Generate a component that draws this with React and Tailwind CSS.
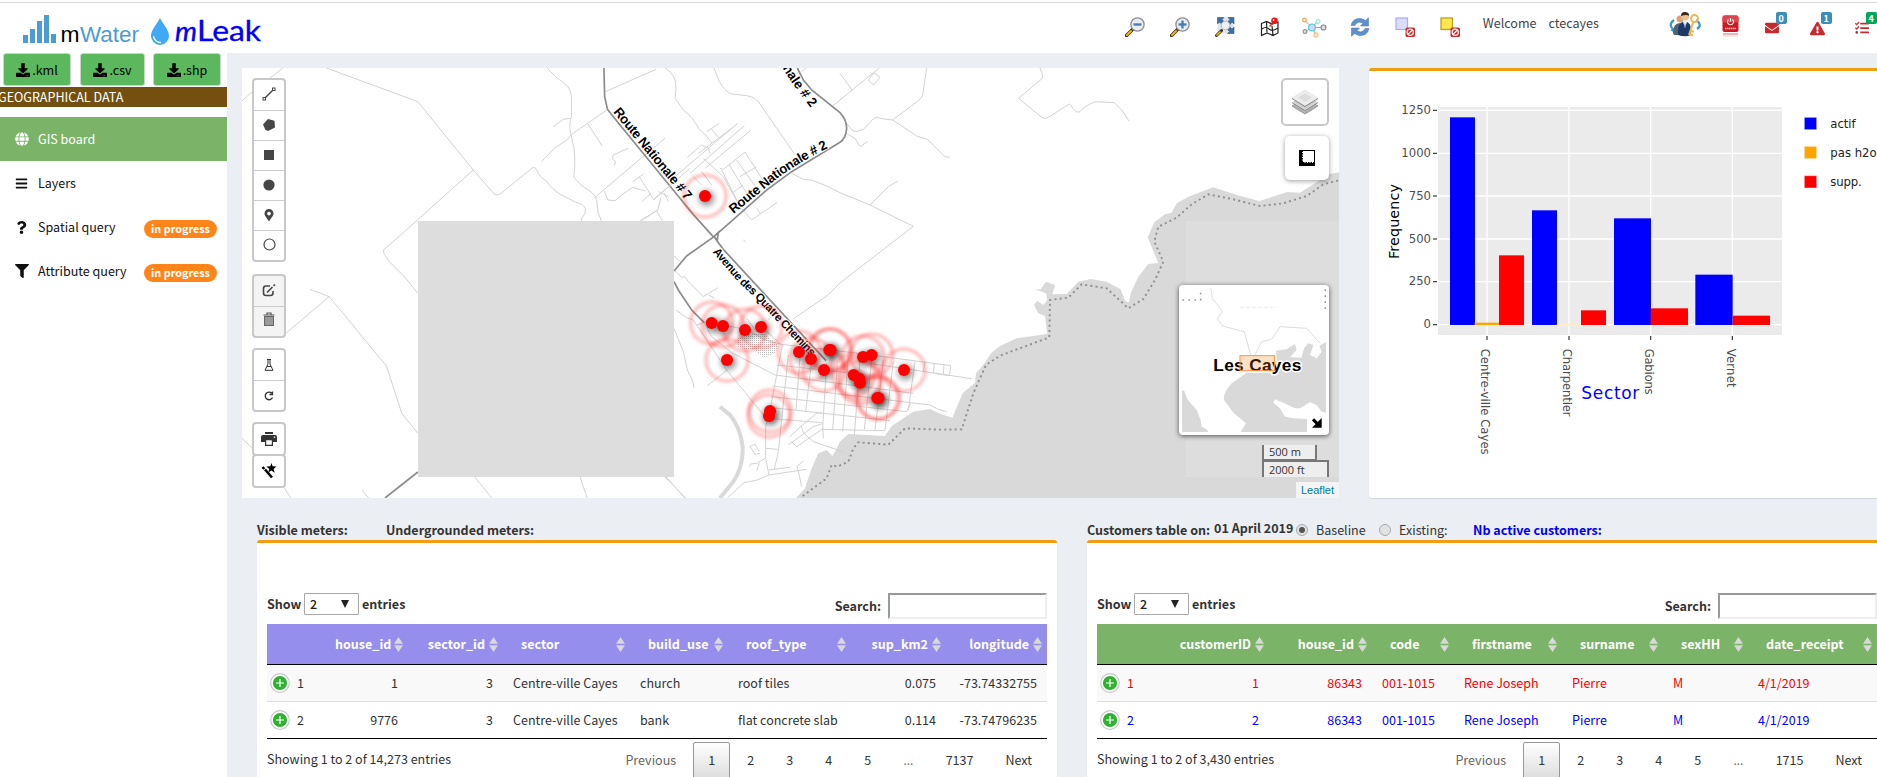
import React from "react";
import {
  FaDownload, FaGlobe, FaBars, FaQuestion, FaFilter, FaEnvelope,
  FaExclamationTriangle, FaTasks, FaMapMarkerAlt,
} from "react-icons/fa";

/* ---------- Header ---------- */

function Magnifier({ sign }) {
  return (
    <svg width="20" height="20" viewBox="0 0 20 20">
      <path d="M1.500 18.500 L7.500 12.500" stroke="#3b3320" strokeWidth="3.400" strokeLinecap="round" />
      <path d="M2 18 L6 14" stroke="#f2b41c" strokeWidth="2" strokeLinecap="round" />
      <circle cx="12.500" cy="7.500" r="6.600" fill="#e9edf1" stroke="#8b8f94" strokeWidth="1.300" />
      <path d="M8.500 7.500 H16.500" stroke="#4a7fb5" strokeWidth="2.400" />
      {sign === "+" && <path d="M12.500 3.500 V11.500" stroke="#4a7fb5" strokeWidth="2.400" />}
    </svg>
  );
}

function ExtentIcon() {
  return (
    <svg width="20" height="20" viewBox="0 0 20 20">
      <rect x="2.500" y="0.500" width="16.500" height="16" fill="#dfe6ee" />
      <path d="M2.500 .5h6.500l-2 2 2.400 2.400-2.500 2.500L4.500 5l-2 2z M19 .5h-6l2 2-2.400 2.400 2.500 2.500L17 5l2 2z M19 16.500h-6.500l2-2-2.400-2.400 2.500-2.500L17 12l2-2z" fill="#3f6fa3" stroke="#2d5787" strokeWidth=".6" />
      <path d="M1.500 18.500 L6.500 13.500" stroke="#3b3320" strokeWidth="3" strokeLinecap="round" />
      <path d="M2 18 L5 15" stroke="#f2b41c" strokeWidth="1.700" strokeLinecap="round" />
      <circle cx="10.500" cy="8.500" r="4.300" fill="#eef1f4" stroke="#b5b9be" />
    </svg>
  );
}

function MapPinIcon() {
  return (
    <svg width="20" height="20" viewBox="0 0 20 20" fill="none" stroke="#222" strokeWidth="1.200">
      <path d="M1.500 6.500 L6.500 4.500 L12 7 L18 5 V16 L13 18.500 L7 16 L1.500 18.500Z M6.500 4.500 L7 16 M12 9 L13 18.500 M2 12 Q6 9 9 12 T18 11" />
      <path d="M9.500 9.500 L13 6" stroke="#e22" strokeWidth="1.400" />
      <circle cx="14.500" cy="3.800" r="3.300" fill="#f01414" stroke="none" />
      <circle cx="13.600" cy="3" r=".9" fill="#fff" stroke="none" />
    </svg>
  );
}

function NetworkIcon() {
  return (
    <svg width="25" height="21" viewBox="0 0 25 21" fill="none">
      <path d="M10 10.500 L2.500 3 M10 10.500 L16 4 M10 10.500 H21 M10 10.500 L3 14.500 M10 10.500 L14 18" stroke="#b59a92" strokeWidth="1" />
      <circle cx="10" cy="10.500" r="3.400" fill="#cfd8fa" stroke="#62cfd6" strokeWidth="1.300" />
      <circle cx="2.500" cy="3" r="1.800" fill="#fff" stroke="#f4a64a" strokeWidth="1.300" />
      <circle cx="16" cy="4.500" r="2" fill="#e6fbf7" stroke="#9fe3da" strokeWidth="1.200" />
      <circle cx="21.500" cy="10.500" r="2.500" fill="#ddd" stroke="#888" strokeWidth="1.200" />
      <circle cx="3" cy="14.500" r="1.900" fill="#ddd" stroke="#999" strokeWidth="1.200" />
      <circle cx="14" cy="18" r="2.100" fill="#fde6cc" stroke="#f7c48b" strokeWidth="1.200" />
    </svg>
  );
}

function RefreshIcon() {
  return (
    <svg width="20" height="20" viewBox="0 0 20 20" fill="#5d90cc" stroke="#4176b3" strokeWidth=".5">
      <path d="M1 8.500 C2 3 7 .5 12 1.800 L15.500 3.500 L18.500 .8 V9 H10.500 L13 6.300 C10 4.300 6.500 5 5 8.500Z" />
      <path d="M19 11.500 C18 17 13 19.500 8 18.200 L4.500 16.500 L1.500 19.200 V11 H9.500 L7 13.700 C10 15.700 13.500 15 15 11.500Z" />
    </svg>
  );
}

function SelectOffIcon({ fill, stroke }) {
  return (
    <svg width="20" height="20" viewBox="0 0 20 20">
      <rect x="1" y="1" width="11.500" height="11.500" fill={fill} stroke={stroke} strokeWidth="1.200" />
      <rect x="10.500" y="10.500" width="9.500" height="9.500" rx="1.500" fill="#d32a2e" />
      <circle cx="15.200" cy="15.200" r="3.100" fill="none" stroke="#fff" strokeWidth="1.200" />
      <path d="M13 17.400 L17.400 13" stroke="#fff" strokeWidth="1.200" />
    </svg>
  );
}

function UsersIcon() {
  return (
    <svg width="34" height="26" viewBox="0 0 34 26">
      <path d="M6 9 Q-1 14 7 20" fill="none" stroke="#3f97c9" strokeWidth="2.200" />
      <path d="M28 9 Q35 14 29 18" fill="none" stroke="#3f97c9" strokeWidth="2.200" />
      <path d="M8 17 l-1 5 -5-3z" fill="#3f97c9" />
      <circle cx="12" cy="8" r="3.500" fill="#d8a377" />
      <path d="M5 22 Q5 12 12 12 Q14 12 15 14 V24 H6Z" fill="#56626f" />
      <circle cx="17" cy="5.500" r="4" fill="#eabf94" />
      <path d="M13 5 Q13 0.500 17.500 1 Q21.500 1.500 21 5 Q19 3 13 5Z" fill="#3b2a1c" />
      <path d="M10 24 Q9 10.500 17 10.500 Q24 10.500 23 24 Q17 26.500 10 24Z" fill="#1d3a66" />
      <path d="M15 10.500 L17 17 L19 10.500Z" fill="#fff" />
      <path d="M17 11.500 L16.200 15 L17 17 L17.800 15Z" fill="#3e8fd0" />
      <circle cx="26.500" cy="7.500" r="3.500" fill="none" stroke="#e9b95c" strokeWidth="2" />
      <path d="M25.500 10.500 L21 24 M22.500 19.500 L26 21 M21.500 23 L25 24.500" stroke="#e9b95c" strokeWidth="2" />
    </svg>
  );
}

function PowerIcon() {
  return (
    <svg width="17" height="23" viewBox="0 0 17 23">
      <rect x=".5" y=".5" width="16" height="16.500" rx="2" fill="#cf1720" />
      <rect x=".5" y=".5" width="16" height="7" rx="2" fill="#e0454b" />
      <path d="M6.500 4.500 A3 3 0 1 0 10.500 4.500 M8.500 3 V6.500" fill="none" stroke="#fff" strokeWidth="1.200" />
      <path d="M3 13.500 H14" stroke="#f6c9cb" strokeWidth="1.400" strokeDasharray="1.400 .5" />
      <rect x="1" y="18" width="15" height="2" fill="#eab5b7" />
      <rect x="1" y="20" width="15" height="2" fill="#f9e6e6" />
    </svg>
  );
}

function Notice({ icon, count, color }) {
  return (
    <div className="relative flex h-full w-[45px] shrink-0 justify-center pt-[21px] text-[#c9282d]">
      {icon}
      <span className={"absolute left-[26px] top-[12px] flex h-[12px] w-[11px] items-center justify-center rounded-[2px] text-[9px] font-bold leading-none text-white " + color}>
        {count}
      </span>
    </div>
  );
}

function Header() {
  const tools = [
    <Magnifier sign="-" />, <Magnifier sign="+" />, <ExtentIcon />, <MapPinIcon />, <NetworkIcon />, <RefreshIcon />,
    <SelectOffIcon fill="#dcdcff" stroke="#a9a9f5" />, <SelectOffIcon fill="#fde74c" stroke="#b59b1d" />,
  ];
  return (
    <header className="flex h-[53px] w-full shrink-0 overflow-hidden bg-white">
      <div className="w-[1112px] shrink-0">
        <svg width="300" height="53" viewBox="0 0 300 53">
          <g fill="#4d9bd3">
            <rect x="23" y="35" width="5" height="8" /><rect x="30" y="29" width="5" height="14" />
            <rect x="37" y="21" width="5" height="22" /><rect x="44" y="15" width="5" height="28" />
            <rect x="51" y="34" width="5" height="9" />
          </g>
          <text y="42.300" fontFamily="Liberation Sans" fontSize="22">
            <tspan x="60.500" fill="#000" textLength="19" lengthAdjust="spacingAndGlyphs">m</tspan>
            <tspan x="80" fill="#4d9bd3" textLength="59" lengthAdjust="spacingAndGlyphs">Water</tspan>
          </text>
          <path d="M160 18 C163 24 169 30 169 36 A9 9 0 0 1 151 36 C151 30 157 24 160 18Z" fill="#3fa9f5" />
          <path d="M153.500 36 A7 7 0 0 0 161 42.500" fill="none" stroke="#fff" strokeWidth="1.300" />
          <g fontFamily="Lato" fontWeight="400" fill="#0000f5" stroke="#0000f5" strokeWidth=".35">
            <text x="175" y="41" fontStyle="italic" fontSize="27" textLength="22" lengthAdjust="spacingAndGlyphs">m</text>
            <text x="197" y="41" fontSize="29" textLength="64" lengthAdjust="spacingAndGlyphs">Leak</text>
          </g>
        </svg>
      </div>
      {tools.map((t, i) => (
        <div key={i} className="flex h-full w-[45.100px] shrink-0 items-start justify-center pt-[17px]">{t}</div>
      ))}
      <div className="ml-[10px] mt-[13px] flex w-[179px] shrink-0 gap-[12px] leading-[20px] text-[#444]">
        <span>Welcome</span><span>ctecayes</span>
      </div>
      <div className="mr-[3px] flex w-[46px] shrink-0 justify-center pt-[11px]"><UsersIcon /></div>
      <div className="flex w-[39px] shrink-0 justify-center pt-[15px]"><PowerIcon /></div>
      <Notice icon={<FaEnvelope size={14} />} count="0" color="bg-[#3c8dbc]" />
      <Notice icon={<FaExclamationTriangle size={15} />} count="1" color="bg-[#3c8dbc]" />
      <Notice icon={<FaTasks size={14} />} count="4" color="bg-[#00a65a]" />
    </header>
  );
}

/* ---------- Sidebar ---------- */

function MenuItem({ icon, label, active, badge }) {
  return (
    <li className={"flex h-[44px] items-center pl-[15px] pr-[10px] " + (active ? "bg-[#7bb368] text-white" : "text-[#111]")}>
      <span className="flex w-[23px] items-center">{icon}</span>
      <span className="flex-1">{label}</span>
      {badge && <span className="mt-[3px] flex h-[18px] w-[73px] items-center justify-center rounded-full bg-[#ff851b] pb-px text-[10.800px] font-bold leading-none text-white">{badge}</span>}
    </li>
  );
}

function Sidebar() {
  const btn = "flex h-[33px] items-center justify-center gap-[2px] rounded-[3px] border border-[#c5d9c5] bg-[#5cb85c] text-black ";
  return (
    <aside className="flex w-[227px] shrink-0 flex-col bg-white">
      <div className="flex h-[34px] pl-[3px]">
        <button className={btn + "w-[68px]"}><FaDownload size={14} />.kml</button>
        <button className={btn + "ml-[9px] w-[65px]"}><FaDownload size={14} />.csv</button>
        <button className={btn + "ml-[8px] w-[68px]"}><FaDownload size={14} />.shp</button>
      </div>
      <div className="h-[20px] bg-[#73500f] leading-[20px] text-white"><span className="-ml-[2px]">GEOGRAPHICAL DATA</span></div>
      <ul className="mt-[10px]">
        <MenuItem active icon={<FaGlobe size={14} />} label="GIS board" />
        <MenuItem icon={<FaBars size={13} />} label="Layers" />
        <MenuItem icon={<FaQuestion size={13} />} label="Spatial query" badge="in progress" />
        <MenuItem icon={<FaFilter size={14} />} label="Attribute query" badge="in progress" />
      </ul>
    </aside>
  );
}

/* ---------- Map ---------- */

const METERS = [
  [195, 408], [215, 789], [249, 798], [315, 810], [363, 801], [261, 900], [477, 876], [513, 897], [552, 930],
  [568, 870], [572, 870], [695, 885], [669, 891], [792, 930], [641, 945], [658, 956], [660, 968], [712, 1014], [716, 1014],
  [390, 1053], [387, 1068],
];

const WEST_STREETS =
  "M6 122L38 92M80 58L120 24M242 24L498 125L653 330L712 402Q720 408 728 402L820 323Q828 320 832 332Q835 348 860 365Q870 385 900 405L940 427Q960 430 967 445Q970 460 957 475L955 483" +
  "M653 330L455 520L402 570Q400 580 408 588L418 605L462 652L498 700M196 688L250 710L124 824M250 710L410 918L453 1060L498 1120" +
  "M860 24Q880 50 910 72Q928 85 928 115V170Q918 200 930 240Q942 280 935 350Q945 370 975 390Q1000 405 1000 430Q998 455 1012 483M877 200L905 178L925 175" +
  "M844 305L880 265L915 240L930 222L1027 150M973 190L1014 258M1023 95L1165 28M1190 235L1095 320L993 413M1087 265L1045 285L1043 297L1052 305L1048 316" +
  "M1020 393L1030 420L1050 422L1075 400L1100 382L1135 393M1130 342L1100 365M1118 350L1158 418L1200 380M1125 425L1150 400M1122 483L1170 450L1178 415M1165 450L1183 483M1172 395L1200 410M1188 400L1200 425" +
  "M657 1251L705 1314M952 1251L972 1314M1190 1251L1248 1314M6 1135L38 1168M122 1280L142 1314M342 1290L360 1314";

const TOWN_STREETS =
  "M75 24Q110 45 108 85L105 115L130 150L155 172L178 208L192 220L215 248M222 24L238 65Q255 95 275 102L320 107Q350 112 362 135L462 280M485 35L498 24M578 138L718 24M600 40L636 90M685 60L702 38L720 52L700 75Z" +
  "M860 24L848 105Q845 115 835 122L758 180Q730 178 708 172Q698 175 690 188L670 208L648 215Q635 213 632 205L620 190M758 180L830 228L862 238L915 290L930 292M622 222L645 235L660 260L683 245" +
  "M455 340L490 358L515 360L560 378L600 398L690 435L820 499L605 665L560 708L458 778M690 435L745 380L773 364" +
  "M105 350L293 190M175 280L275 205M313 197L150 340M333 210L195 325M142 292L185 255L205 265L210 280M200 215L238 190M215 208L235 232M190 295L250 350L300 440L335 480M240 325L250 328L315 276L375 370M245 330L300 440M268 315L320 400M290 300L350 385M300 350L350 320M275 400L310 375M335 480L412 427M350 445L362 462M310 540L317 545M42 418L150 325M45 455L0 483M160 350L185 375M185 335L215 375" +
  "M102 587L120 605M102 630L125 652L135 650L145 665L190 710L233 683M205 705L222 713M102 805L130 875L142 930L157 960L162 983" +
  "M108 750L140 773L160 780L170 795L260 930L375 1070M192 787L215 830L275 878L405 945M202 977L262 930M170 795L200 785L300 805L340 820L375 840L425 853M320 775L350 815M365 800L430 860M385 780L395 770" +
  "M425 853L640 878L932 917M410 915L640 940M700 912L995 956M405 945L820 1000M398 978L870 1035L895 1048L920 1055M393 1010L800 1055L812 1030M388 1042L750 1082M385 1075L545 1088M545 1108L735 1112" +
  "M427 855L392 1040L377 1100V1195L387 1245M445 885L415 1175L403 1228M480 890L468 1050M515 900L497 1055M560 910L548 1100L550 1135M592 915L578 1110M625 890L608 1115M660 900L643 1125M695 900L673 1108M730 900L705 1112M760 905L735 1112M825 905L805 1050M855 905L850 935M883 912L880 940L928 947L932 917M912 915L910 943" +
  "M377 1165L413 1168M330 1160L345 1152L357 1175M330 1160L345 1183L360 1180M328 1220L332 1212L350 1210L375 1195M358 1210L350 1232M262 1314L312 1268Q350 1265 387 1245L500 1228M387 1230L450 1222M470 1220L490 1203M472 1220L485 1280" +
  "M445 1155L520 1100L550 1090M455 1145L470 1160L550 1105M450 1130L484 1098L530 1060L545 1058M484 1098L490 1118L520 1145L608 1175M78 1251L135 1314";

const COAST =
  "M-612 1314L-585 1285L-565 1225L-545 1180L-520 1170L-502 1188L-480 1145L-455 1122L-345 1128L-325 1098L-260 1055L-210 1047L-175 1063L-143 1073L-112 1000L-75 968L-72 940L-50 915L-27 880L0 858L50 835L142 822L135 768L115 760L102 735L112 722L130 735L142 720L138 700L105 688L122 688L138 665L165 675L157 703L200 702L235 665L272 657L320 665L362 688L375 722L387 727L392 700L415 650L445 612L475 609L443 532L463 487L495 463L515 458L530 430L565 410L640 382L710 405L778 423L862 396L900 398L960 360L987 343L1017 337V1314Z";

const BOUNDARY =
  "M-592 1308L-520 1255L-505 1215L-488 1220L-455 1205L-440 1165L-425 1147L-335 1154L-285 1105L-180 1109L-115 1108L-80 1000L-42 915L0 887L148 832L150 720L205 713L245 673L320 685L385 745L430 717L465 660L490 605L463 545L475 500L530 473L575 433L625 403L700 418L780 438L850 430L920 408L970 373L1017 361";

function MapDrawing() {
  const west = "translate(240 60) scale(.357143 .333333)";
  const town = "translate(640 60) scale(.333333)";
  const east = "translate(1000 60) scale(.333333)";
  const minor = { fill: "none", stroke: "#d2d2d2", strokeWidth: 1, vectorEffect: "non-scaling-stroke" };
  const major = { fill: "none", stroke: "#8c8c8c", strokeWidth: 1.7, vectorEffect: "non-scaling-stroke" };
  const label = { fontFamily: "Liberation Sans", fontWeight: 700, fill: "#000", stroke: "#fff", strokeWidth: 2, paintOrder: "stroke" };
  return (
    <svg className="block" width="1097" height="430" viewBox="242 68 1097 430">
      <defs>
        <filter id="ring" x="-50%" y="-50%" width="200%" height="200%"><feGaussianBlur stdDeviation="1.600" /></filter>
        <filter id="shade" x="-100%" y="-100%" width="300%" height="300%"><feGaussianBlur stdDeviation="3" /></filter>
        <pattern id="dots" width="2" height="2" patternUnits="userSpaceOnUse"><rect width="1" height="1" fill="#bbb" /></pattern>
        <path id="rn2" d="M733.500 214L769 185Q791 166.500 829 147.500" />
        <path id="rn2b" d="M778.500 61Q793 87 820 119" />
        <path id="rn7" d="M613 112L687 202" />
        <path id="aqc" d="M712.500 252L736 279.500L757 300L812 358" />
      </defs>
      <rect x="242" y="68" width="1097" height="430" fill="#fff" />
      <g transform={east}>
        <path d={COAST} fill="#d9d9d9" />
        <rect x="557" y="483" width="460" height="768" fill="#ddd" />
        <path {...minor} d="M120 24L127 42V55L56 115L125 172Q138 180 148 170L208 132Q215 135 218 145Q230 160 240 155Q250 140 285 125L343 128Q370 150 387 183" />
        <path d={BOUNDARY} fill="none" stroke="#8e8e8e" strokeWidth="1.900" strokeDasharray="2 3.200" vectorEffect="non-scaling-stroke" />
      </g>
      <g transform={west}>
        <path {...minor} d={WEST_STREETS} />
        <path {...major} d="M1019 24L1021 110L1029 148L1060 190L1272 467L1325 530M406 1314L498 1236" />
      </g>
      <g transform={town}>
        <path {...minor} d={TOWN_STREETS} />
        <path d="M240 1040L270 1065Q300 1100 308 1160Q310 1220 280 1265L240 1314" fill="none" stroke="#d9d9d9" strokeWidth="12" />
        <path {...major} d="M472 24L490 60L515 90L600 158Q620 180 620 205Q618 235 600 247L455 335L380 390L222 530L140 588L102 633M102 665L115 690L155 750L192 787M222 530L250 568L558 902M222 530L235 517L232 540Z" />
      </g>
      <path d="M738 338L760 332L778 344L776 352L764 358L755 350L737 348Z" fill="url(#dots)" />
      <rect x="418" y="221" width="256" height="256" fill="#ddd" />
      <text {...label} fontSize="13.300"><textPath href="#rn7" textLength="115">Route Nationale # 7</textPath></text>
      <text {...label} fontSize="13.300"><textPath href="#rn2" textLength="116">Route Nationale # 2</textPath></text>
      <text {...label} fontSize="13.300"><textPath href="#rn2b" textLength="57">onale # 2</textPath></text>
      <text {...label} fontSize="11.500"><textPath href="#aqc" textLength="144">Avenue des Quatre Chemins</textPath></text>
      {METERS.map(([x, y], i) => {
        const cx = 640 + x / 3, cy = 60 + y / 3;
        return (
          <g key={i}>
            <circle cx={cx} cy={cy} r="21" fill="none" stroke="#ff2020" strokeWidth="3.400" opacity=".29" filter="url(#ring)" />
            <circle cx={cx + 1.500} cy={cy + 2} r="7.500" fill="#000" opacity=".45" filter="url(#shade)" />
          </g>
        );
      })}
      {METERS.map(([x, y], i) => <circle key={i} cx={640 + x / 3} cy={60 + y / 3} r="6" fill="#fe0000" />)}
    </svg>
  );
}

function ToolGroup({ children, muted, raised, className = "" }) {
  return (
    <div className={"flex w-[34px] flex-col rounded-[4px] border-2 border-[#c8c8c8] " + (muted ? "bg-[#f4f4f4] " : "bg-white ") + className}>
      {React.Children.map(children, (c, i) => (
        <div className={"flex h-[30px] items-center justify-center text-[#464646] " + (i ? "border-t border-[#ccc] " : "") + (raised ? "pb-[2px]" : "")}>{c}</div>
      ))}
    </div>
  );
}

function MapTools() {
  return (
    <div className="absolute left-[10px] top-[10px] flex flex-col">
      <ToolGroup raised>
        <svg width="14" height="14" viewBox="0 0 14 14" fill="#fff" stroke="#464646"><path d="M3 11L11 3" strokeWidth="1.500" /><rect x="1" y="10.500" width="2.500" height="2.500" /><rect x="10.500" y="1" width="2.500" height="2.500" /></svg>
        <svg width="14" height="14" viewBox="0 0 14 14" fill="#464646"><path d="M6 1L12.500 2.800L13 9.500L6 13L3.500 12L1 6.500Z" /></svg>
        <svg width="10" height="10"><rect width="10" height="10" fill="#464646" /></svg>
        <svg width="12" height="12"><circle cx="6" cy="6" r="5.600" fill="#464646" /></svg>
        <FaMapMarkerAlt size={12} />
        <svg width="13" height="13"><circle cx="6.500" cy="6.500" r="5.500" fill="none" stroke="#464646" strokeWidth="1.200" /></svg>
      </ToolGroup>
      <ToolGroup muted raised className="mt-[12px]">
        <svg width="14" height="14" viewBox="0 0 14 14" fill="none" stroke="#464646" strokeWidth="1.600"><path d="M8 3H4Q1.500 3 1.500 5.500V10Q1.500 12.500 4 12.500H8.500Q11 12.500 11 10V8M5 9.500L10.500 4M11.500 3L13 1.500" /></svg>
        <svg className="-mt-[4px]" width="12" height="14" viewBox="0 0 12 14"><path d="M0.500 3H11.500M4 3V1H8V3" fill="none" stroke="#555" strokeWidth="1.200" /><rect x="1.500" y="4.500" width="9" height="9" fill="#999" stroke="#666" /></svg>
      </ToolGroup>
      <ToolGroup className="mt-[10px]">
        <svg width="10" height="12" viewBox="0 0 10 12" fill="none" stroke="#333" strokeWidth="1"><path d="M3 .5H7M4 .5V5L1 11.300H9L6 5V.5M3 7.500H7" /></svg>
        <svg width="10" height="10" viewBox="0 0 10 10" fill="none" stroke="#333" strokeWidth="1.300"><path d="M8.500 6.500A3.800 3.800 0 1 1 7.800 2.300M8.500 .5V3.500H5.500" /></svg>
      </ToolGroup>
      <ToolGroup className="mt-[10px]">
        <svg width="16" height="14" viewBox="0 0 16 14" fill="#333"><path d="M4 0H12V2H4Z M2 3H14Q16 3 16 5V10H12V7.500H4V10H0V5Q0 3 2 3Z" /><path d="M4.600 7.600H11.400V13.400H4.600Z" fill="#fff" stroke="#333" strokeWidth="1.200" /><circle cx="13.500" cy="5.300" r=".8" fill="#fff" /></svg>
      </ToolGroup>
      <ToolGroup className="-mt-[2px]">
        <svg width="16" height="16" viewBox="0 0 16 16" fill="#000"><path d="M4 6.500L11 14.500" stroke="#000" strokeWidth="2.600" /><path d="M1.500 4L3.300 6" stroke="#000" strokeWidth="2.600" /><path d="M10.500 0L11.600 3.300L15.500 3.500L12.600 6L13.700 9.800L10.400 7.600L7.200 9.600L8.300 6L5.500 3.500L9.300 3.300Z" /></svg>
      </ToolGroup>
    </div>
  );
}

function MiniMap() {
  return (
    <div className="h-[150px] w-[150px] rounded-[4px] bg-white p-[3px] shadow-[0_1px_5px_rgba(0,0,0,0.65)]">
      <svg className="block" width="144" height="144" viewBox="546 684 432 432">
        <g fill="#d9d9d9">
          <path d="M546 990L553 993L562 1018L590 1050L602 1080L605 1100L618 1106L625 1116H546Z" />
          <path d="M978 1058L965 1055L950 1035L930 1027L900 1045L885 1045L850 1028L825 1018L820 1028L840 1045L855 1070L880 1075L921 1077V1116H722L738 1090L720 1075L700 1058L672 1020Q668 1000 695 970L740 938H830V900L828 872L860 868L885 852L890 870L870 892L905 893L912 865L925 850L940 855L930 885L950 895L965 875L958 858L978 845Z" />
        </g>
        <path d="M633 685L637 715L668 755L652 775L668 798L733 815L752 885M765 885L785 845L815 838L840 800L920 805L960 850" fill="none" stroke="#ddd" strokeWidth="3" />
        <path d="M720 742H830" stroke="#e5e5e5" strokeWidth="2" strokeDasharray="12 6" />
        <path d="M547 720H602V688M976 688V750" fill="none" stroke="#999" strokeWidth="5" strokeDasharray="5 13" />
        <text x="640" y="932" fontFamily="Liberation Sans" fontWeight="700" fontSize="52" textLength="264" stroke="#fff" strokeWidth="9" paintOrder="stroke">Les Cayes</text>
        <rect x="720" y="887" width="104" height="45" fill="#ff7800" fillOpacity=".22" stroke="#ff9040" strokeWidth="3" />
        <rect x="921" y="1060" width="57" height="56" fill="#fff" />
        <path d="M939 1078L960 1099" stroke="#000" strokeWidth="9" /><path d="M965 1074V1103H936Z" />
      </svg>
    </div>
  );
}

function MapPanel() {
  return (
    <section className="relative h-[430px] w-[1097px] shrink-0 overflow-hidden">
      <MapDrawing />
      <MapTools />
      <div className="absolute right-[10px] top-[10px] flex h-[48px] w-[48px] items-center justify-center rounded-[5px] border-2 border-[#c8c8c8] bg-white">
        <svg width="28" height="28" viewBox="0 0 28 28">
          <path d="M1 18L14 10L27 18L14 26Z" fill="#b0b0b0" stroke="#8a8a8a" strokeWidth=".8" />
          <path d="M1 14L14 6L27 14L14 22Z" fill="#cdcdcd" stroke="#fff" strokeWidth=".8" /><path d="M1 14.500L14 22.500L27 14.500" fill="none" stroke="#8a8a8a" />
          <path d="M1 10L14 2L27 10L14 18Z" fill="#ececec" stroke="#e0e0e0" strokeWidth=".6" /><path d="M7 9.500L14 5.500L21 9.500L14 14Z" fill="#dcdcdc" /><path d="M1 10.500L14 18.500L27 10.500" fill="none" stroke="#8a8a8a" />
        </svg>
      </div>
      <div className="absolute right-[10px] top-[68px] flex h-[44px] w-[44px] items-center justify-center rounded-[5px] bg-white shadow-[0_1px_5px_rgba(0,0,0,0.4)]">
        <svg width="16" height="16" viewBox="0 0 16 16"><rect width="16" height="16" /><path d="M4 1H15V12H4Z" fill="#fff" /><path d="M3 2.500H4.500M3 5H4.500M3 7.500H4.500M3 10H4.500M6 11.500V13M8.500 11.500V13M11 11.500V13M13.500 11.500V13" stroke="#fff" /></svg>
      </div>
      <div className="absolute bottom-[63px] right-[10px]"><MiniMap /></div>
      <div className="absolute right-[10px] top-[377px] w-[67px] text-[11px] text-[#333]">
        <div className="h-[16px] w-[55px] border-x-2 border-b-2 border-[#777] bg-white/50 pl-[5px] font-['Open_Sans'] leading-[14px]">500 m</div>
        <div className="-mt-[1px] h-[17px] w-[67px] border-x-2 border-t-2 border-[#777] bg-white/50 pl-[5px] font-['Open_Sans'] leading-[16px]">2000 ft</div>
      </div>
      <div className="absolute bottom-0 right-0 h-[16px] w-[43px] bg-white/70 text-center font-['Liberation_Sans'] text-[11px] leading-[16px] text-[#0078a8]">Leaflet</div>
    </section>
  );
}

/* ---------- Chart ---------- */

const BARS = [
  [270, 172, 75, "#00f"], [344, 788, 74, "#ffa500"], [417, 586, 75, "#f00"],
  [516, 451, 75, "#00f"], [590, 793, 74, "#ffe0a8"], [663, 751, 75, "#f00"],
  [762, 475, 111, "#00f"], [872, 745, 112, "#f00"],
  [1006, 644, 112, "#00f"], [1118, 767, 112, "#f00"],
];
const Y_TICKS = [["1250", 151], ["1000", 280], ["750", 408], ["500", 537], ["250", 665], ["0", 794]];
const X_TICKS = [["Centre-ville Cayes", 381, 318], ["Charpentier", 627, 204], ["Gabions", 872, 138], ["Vernet", 1117, 117]];
const LEGEND = [["actif", 190, "#00f", 76], ["pas h2o", 277, "#ffa500", 139], ["supp.", 365, "#f00", 94]];

function ChartPanel() {
  return (
    <section className="ml-[30px] h-[430px] w-[520px] shrink-0 rounded-[3px] border-t-[3px] border-[#f39c12] bg-white shadow-[0_1px_1px_rgba(0,0,0,0.1)]">
      <svg className="block" width="520" height="425" viewBox="27 33 1560 1275" fontFamily="DejaVu Sans" fill="#4d4d4d">
        <rect x="234" y="141" width="1032" height="684" fill="#ebebeb" />
        {Y_TICKS.map(([t, y]) => (
          <g key={t}>
            <path d={`M234 ${y}H1266`} stroke="#fff" strokeWidth="4" />
            <path d={`M219 ${y}H231`} stroke="#333" strokeWidth="3.500" />
            <text x="213" y={y + 11} textAnchor="end" fontSize="35">{t}</text>
          </g>
        ))}
        {X_TICKS.map(([t, x, len]) => (
          <g key={t}>
            <path d={`M${x} 141V825`} stroke="#fff" strokeWidth="4" />
            <path d={`M${x} 828V840`} stroke="#333" strokeWidth="3.500" />
            <text transform={`translate(${x - 17} 866) rotate(90)`} fontSize="35" textLength={len}>{t}</text>
          </g>
        ))}
        {BARS.map(([x, y, w, c]) => <rect key={x} x={x} y={y} width={w} height={795 - y} fill={c} />)}
        <text transform="translate(116 597) rotate(-90)" fontSize="43" fill="#000" textLength="225">Frequency</text>
        <text x="664" y="1016" fontSize="51" fill="#00f" textLength="174">Sector</text>
        {LEGEND.map(([t, y, c, len]) => (
          <g key={t}>
            <rect x="1333" y={y - 18} width="37" height="37" fill={c} stroke="#fff" strokeOpacity=".4" strokeWidth="3" />
            <text x="1411" y={y + 13} fontSize="35" fill="#222" textLength={len}>{t}</text>
          </g>
        ))}
      </svg>
    </section>
  );
}

/* ---------- Data tables ---------- */

function SortArrows() {
  return (
    <svg className="absolute right-[5px] top-[13px]" width="9" height="15" viewBox="0 0 9 15" fill="#d8d8d8">
      <path d="M4.500 0L9 6.800H0ZM4.500 15L0 8.200H9Z" />
    </svg>
  );
}

function DataTable({ columns, rows, head, total, lastPage }) {
  return (
    <section className="h-[300px] w-[800px] shrink-0 rounded-t-[3px] border-t-[3px] border-[#f39c12] bg-white px-[10px] pt-[50px] shadow-[0_1px_1px_rgba(0,0,0,0.1)]">
      <div className="flex h-[31px] items-start justify-between font-bold text-[#333]">
        <div className="flex h-[22px] items-center">
          <span className="w-[37px] whitespace-nowrap">Show</span>
          <span className="flex h-[22px] w-[55px] items-center justify-between rounded-[1px] border border-[#a9a9a9] pl-[5px] pr-[9px]">
            <span className="font-medium text-[#222]">2</span>
            <svg width="8" height="8" viewBox="0 0 8 8"><path d="M0 0H8L4 8Z" fill="#222" /></svg>
          </span>
          <span className="ml-[3px]">entries</span>
        </div>
        <div className="flex h-[26px] items-center">
          <span className="mr-[7px]">Search:</span>
          <span className="h-[26px] w-[159px] border-2 border-b-[#eee] border-l-[#999] border-r-[#eee] border-t-[#999] bg-white" />
        </div>
      </div>
      <table className="w-[780px] table-fixed border-separate border-spacing-0 border-b border-black">
        <colgroup>{columns.map((c) => <col key={c.name} style={{ width: c.width }} />)}</colgroup>
        <thead>
          <tr className={head}>
            {columns.map((c) => (
              <th key={c.name} className={"relative h-[41px] whitespace-nowrap border-b border-black px-[18px] py-0 font-bold text-white " + (c.right ? "text-right" : "text-left")}>
                {c.name}{c.name && <SortArrows />}
              </th>
            ))}
          </tr>
        </thead>
        <tbody>
          {rows.map((r, ri) => (
            <tr key={ri} className={(ri === 0 ? "h-[36px] bg-[#f9f9f9] " : "h-[37px] ") + r.color}>
              {r.cells.map((v, i) => (
                <td key={i} className={"whitespace-nowrap px-[10px] py-0 " + (ri ? "border-t border-[#ddd] " : "") + (columns[i].right ? "text-right" : "text-left")}>
                  {i === 0 ? (
                    <span className="-ml-[7px] flex items-center gap-[7px]">
                      <svg width="20" height="20" viewBox="0 0 20 20">
                        <circle cx="10" cy="10" r="9.300" fill="#fff" stroke="#c9c9c9" strokeWidth="1.200" />
                        <circle cx="10" cy="10" r="7.100" fill="#31b131" />
                        <path d="M6 10H14M10 6V14" stroke="#fff" strokeWidth="1.200" />
                      </svg>{v}
                    </span>
                  ) : v}
                </td>
              ))}
            </tr>
          ))}
        </tbody>
      </table>
      <div className="flex justify-between text-[#333]">
        <div className="pt-[10px] leading-[20px]">Showing 1 to 2 of {total} entries</div>
        <div className="flex gap-[2px] pt-[3px]">
          <span className="flex h-[38px] items-center px-[15px] pb-[2px] text-[#666]">Previous</span>
          <span className="flex h-[38px] w-[37px] items-center justify-center rounded-[2px] border border-[#979797] bg-linear-to-b from-white to-[#dcdcdc] pb-[2px]">1</span>
          {["2", "3", "4", "5"].map((p) => <span key={p} className="flex h-[38px] w-[37px] items-center justify-center pb-[2px]">{p}</span>)}
          <span className="flex h-[38px] w-[40.500px] items-center justify-center font-['Open_Sans'] text-[#666]">…</span>
          <span className="flex h-[38px] items-center px-[15px] pb-[2px]">{lastPage}</span>
          <span className="flex h-[38px] items-center px-[15px] pb-[2px]">Next</span>
        </div>
      </div>
    </section>
  );
}

const METER_COLUMNS = [
  { name: "", width: 50 }, { name: "house_id", width: 91, right: true }, { name: "sector_id", width: 95, right: true },
  { name: "sector", width: 127 }, { name: "build_use", width: 98 }, { name: "roof_type", width: 123 },
  { name: "sup_km2", width: 95, right: true }, { name: "longitude", width: 101, right: true },
];
const CUSTOMER_COLUMNS = [
  { name: "", width: 60 }, { name: "customerID", width: 112, right: true }, { name: "house_id", width: 103, right: true },
  { name: "code", width: 82 }, { name: "firstname", width: 108 }, { name: "surname", width: 101 },
  { name: "sexHH", width: 85 }, { name: "date_receipt", width: 129 },
];

function Radio({ on }) {
  return <span className="flex h-[12px] w-[12px] items-center justify-center rounded-full border border-[#aaa] bg-[#e2e2e2]">{on && <span className="h-[6px] w-[6px] rounded-full bg-[#555]" />}</span>;
}

export default function App() {
  return (
    <div className="h-[777px] w-full overflow-hidden bg-white font-['Noto_Sans_CJK_SC',sans-serif] text-[12.540px] leading-[20px] text-[#333]">
      <div className="relative">
        <div className="absolute left-0 top-[2px] h-px w-full bg-[#d9d9d9]" />
        <Header />
      </div>
      <div className="flex h-[724px] w-full overflow-hidden">
        <Sidebar />
        <main className="min-w-0 flex-1 overflow-hidden bg-[#ebeff4] pl-[15px] pt-[15px]">
          <div className="flex w-[1660px]">
            <MapPanel />
            <ChartPanel />
          </div>
          <div className="flex w-[1660px] gap-[30px] pl-[15px]">
            <div>
              <div className="flex h-[42px] items-end gap-[38px] font-bold"><span>Visible meters:</span><span>Undergrounded meters:</span></div>
              <DataTable
                columns={METER_COLUMNS} head="bg-[#968eec]" total="14,273" lastPage="7137"
                rows={[
                  { color: "text-[#333]", cells: ["1", "1", "3", "Centre-ville Cayes", "church", "roof tiles", "0.075", "-73.74332755"] },
                  { color: "text-[#333]", cells: ["2", "9776", "3", "Centre-ville Cayes", "bank", "flat concrete slab", "0.114", "-73.74796235"] },
                ]}
              />
            </div>
            <div>
              <div className="flex h-[42px] items-end whitespace-nowrap">
                <span className="w-[127px] font-bold">Customers table on:</span>
                <span className="mb-[2px] w-[82px] font-bold">01 April 2019</span>
                <span className="flex h-[20px] w-[20px] items-center"><Radio on /></span>
                <span className="w-[63px]">Baseline</span>
                <span className="flex h-[20px] w-[20px] items-center"><Radio /></span>
                <span className="w-[74px]">Existing:</span>
                <span className="font-bold text-[#0000f5]">Nb active customers:</span>
              </div>
              <DataTable
                columns={CUSTOMER_COLUMNS} head="bg-[#7bb368]" total="3,430" lastPage="1715"
                rows={[
                  { color: "text-[#fa0000]", cells: ["1", "1", "86343", "001-1015", "Rene Joseph", "Pierre", "M", "4/1/2019"] },
                  { color: "text-[#0000fa]", cells: ["2", "2", "86343", "001-1015", "Rene Joseph", "Pierre", "M", "4/1/2019"] },
                ]}
              />
            </div>
          </div>
        </main>
      </div>
    </div>
  );
}
